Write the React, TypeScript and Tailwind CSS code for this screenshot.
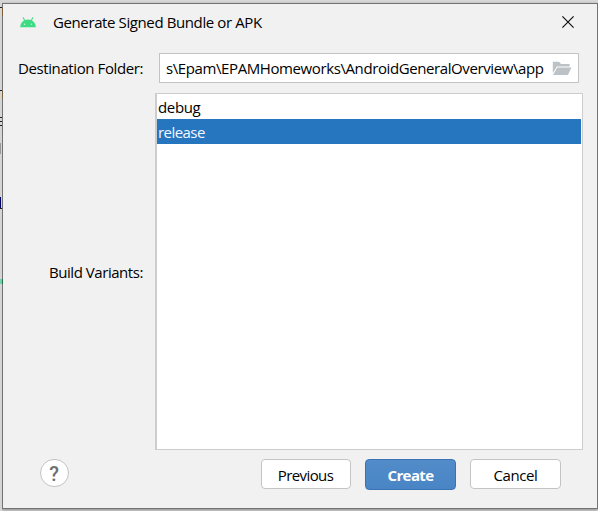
import React from "react";

const variants = ["debug", "release"];

function AndroidLogo() {
  return (
    <svg width="16" height="11" viewBox="0 0 16 11" className="block">
      <path d="M3.200.8 5 4M12.800.8 11 4" stroke="#3ddc84" strokeWidth="1.100" strokeLinecap="round" />
      <path d="M.2 10.200C.4 5.900 3.500 2.600 8 2.600s7.600 3.300 7.800 7.600z" fill="#3ddc84" />
      <circle cx="4.500" cy="7.200" r=".7" fill="#d5f6e3" />
      <circle cx="11.500" cy="7.200" r=".7" fill="#d5f6e3" />
    </svg>
  );
}

function FolderIcon() {
  return (
    <svg width="20" height="15" viewBox="0 0 20 15" className="block">
      <path d="M.8 12V.8h6.200l2 2.200H17.600v2.600H4.900z" fill="#bdc2c6" />
      <path d="M5.200 6.500H19.500L15.900 14H1z" fill="#bdc2c6" />
    </svg>
  );
}

export default function App() {
  return (
    <div className="relative h-[511px] w-[598px] overflow-hidden bg-[#d8d8d8] pl-[2px] pt-[3px] font-['Open_Sans','Noto_Sans',sans-serif] text-[15px] leading-[20px] text-black">
      <div className="absolute left-0 top-0 h-[511px] w-[2px] bg-[#d5d5d5]">
        <div className="absolute top-[7px] h-px w-[2px] bg-[#202020]" />
        <div className="absolute top-[90px] h-px w-[2px] bg-[#202020]" />
        <div className="absolute top-[117px] h-[9px] w-[2px] border-y border-[#202020]" />
        <div className="absolute top-[121px] h-px w-[2px] bg-[#202020]" />
        <div className="absolute top-[143px] h-[11px] w-px bg-[#999999]" />
        <div className="absolute top-[197px] h-[11px] w-px bg-[#000066]" />
        <div className="absolute top-[208px] h-px w-[2px] bg-[#202020]" />
        <div className="absolute top-[279px] h-[5px] w-[2px] bg-[#72d0b4]" />
      </div>
      <div className="absolute left-[2px] top-[8px] z-10 h-[8px] w-px bg-[#80603b]" />
      <div className="absolute left-[2px] top-[91px] z-10 h-[8px] w-px bg-[#80603b]" />
      <div className="absolute left-[2px] top-[279px] z-10 h-[5px] w-px bg-[#28713e]" />
      <main className="flex h-[506px] w-[596px] flex-col border border-[#737373] bg-[#f1f1f1] shadow-[0_1px_3px_#888888]">
        <header className="flex h-[36px] items-center pl-[17px] pr-[23px]">
          <AndroidLogo />
          <h1 className="ml-[17px] whitespace-nowrap tracking-[-0.390px]">Generate Signed Bundle or APK</h1>
          <button aria-label="Close" className="ml-auto">
            <svg width="12" height="12" viewBox="0 0 12 12" className="block">
              <path d="m.4.4 11.200 11.200M11.600.4.4 11.600" stroke="#111111" strokeWidth="1.200" />
            </svg>
          </button>
        </header>

        <section className="mt-[13px] flex h-[30px] items-center">
          <label className="w-[156px] whitespace-nowrap pl-[15px] tracking-[-0.400px]">Destination Folder:</label>
          <div className="flex h-[30px] w-[420px] items-center border border-[#c4c4c4] bg-white pl-[6px] pr-[6px]">
            <span className="whitespace-nowrap tracking-[-0.400px]">s\Epam\EPAMHomeworks\AndroidGeneralOverview\app</span>
            <span className="ml-auto"><FolderIcon /></span>
          </div>
        </section>

        <section className="mt-[10px] flex h-[357px]">
          <label className="flex w-[152px] items-center whitespace-nowrap pl-[46px] tracking-[-0.450px]">Build Variants:</label>
          <ul className="w-[428px] border border-l-2 border-[#cdcdcd] bg-white pr-px">
            {variants.map((name) => (
              <li
                key={name}
                className={name === "release" ? "h-[25px] bg-[#2675bf] pl-px pt-[3px] tracking-[-0.550px] text-[#f4f8ff]" : "h-[25px] pl-px pt-[3px] tracking-[-0.350px]"}
              >
                {name}
              </li>
            ))}
          </ul>
        </section>

        <footer className="flex pl-[37px] pt-[9px]">
          <button className="flex h-[28px] w-[29px] items-center justify-center rounded-full border-[1.500px] border-[#c2c2c2] bg-white" aria-label="Help">
            <span className="-ml-px pt-px font-['Roboto',sans-serif] text-[20px] font-medium leading-none text-[#6e6e6e]">?</span>
          </button>
          <button className="ml-[192px] h-[30px] w-[90px] rounded-[4px] border border-[#c4c4c4] bg-white pt-px pr-[7px] pl-[6px] tracking-[-0.600px]">Previous</button>
          <button className="ml-[14px] h-[31px] w-[91px] rounded-[4px] border border-[#3b72b4] bg-gradient-to-b from-[#528cc9] to-[#4985c5] font-bold tracking-[-0.600px] text-white">Create</button>
          <button className="ml-[14px] h-[30px] w-[91px] rounded-[4px] border border-[#c4c4c4] bg-white pt-px tracking-[-0.400px]">Cancel</button>
        </footer>
      </main>
    </div>
  );
}
